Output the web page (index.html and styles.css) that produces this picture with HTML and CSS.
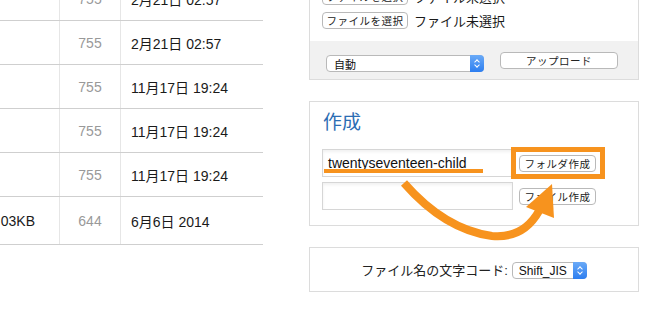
FILE: index.html
```html
<!DOCTYPE html>
<html lang="ja">
<head>
    <meta charset="UTF-8">
    <title>ファイルマネージャー</title>
    <link rel="stylesheet" href="styles.css">
</head>
<body>

<div class="page">
    <div class="file-list">
        <table class="files">
            <tr>
                <td class="size"></td>
                <td class="perm">755</td>
                <td class="date">2月21日 02:57</td>
            </tr>
            <tr>
                <td class="size"></td>
                <td class="perm">755</td>
                <td class="date">2月21日 02:57</td>
            </tr>
            <tr>
                <td class="size"></td>
                <td class="perm">755</td>
                <td class="date">11月17日 19:24</td>
            </tr>
            <tr>
                <td class="size"></td>
                <td class="perm">755</td>
                <td class="date">11月17日 19:24</td>
            </tr>
            <tr>
                <td class="size"></td>
                <td class="perm">755</td>
                <td class="date">11月17日 19:24</td>
            </tr>
            <tr class="last">
                <td class="size">1.03KB</td>
                <td class="perm">644</td>
                <td class="date">6月6日 2014</td>
            </tr>
        </table>
    </div>

    <div class="sidebar">
        <div class="box upload-box">
            <div class="upload-files">
                <div class="file-row">
                    <span class="btn file-btn">ファイルを選択</span>
                    <span class="file-name">ファイル未選択</span>
                </div>
                <div class="file-row">
                    <span class="btn file-btn">ファイルを選択</span>
                    <span class="file-name">ファイル未選択</span>
                </div>
            </div>
            <div class="upload-footer">
                <div class="select select-mode">
                    <span>自動</span>
                    <span class="stepper"></span>
                </div>
                <span class="btn upload-btn">アップロード</span>
            </div>
        </div>

        <div class="box create-box">
            <h2>作成</h2>
            <div class="create-row">
                <div class="text-input">twentyseventeen-child</div>
                <span class="btn create-btn">フォルダ作成</span>
            </div>
            <div class="create-row">
                <div class="text-input"></div>
                <span class="btn create-btn">ファイル作成</span>
            </div>

            <!-- 注釈 -->
            <div class="mark-underline"></div>
            <div class="mark-box"></div>
            <svg class="mark-arrow" width="200" height="80" viewBox="390 175 200 80">
                <path d="M404 184 C 425 208, 455 232, 492 237 C 515 239, 530 228, 539 212" fill="none" stroke="#f7931e" stroke-width="8"/>
                <polygon points="526,208 552,185 554,219" fill="#f7931e"/>
            </svg>
        </div>

        <div class="box charset-box">
            <span class="charset-label">ファイル名の文字コード:</span>
            <div class="select select-charset">
                <span>Shift_JIS</span>
                <span class="stepper"></span>
            </div>
        </div>
    </div>
</div>

</body>
</html>
```

FILE: styles.css
```css
body, html {
    margin: 0;
    padding: 0;
    background-color: #fff;
    font-family: "Liberation Sans", "Noto Sans CJK JP", sans-serif;
    color: #1a1a1a;
    overflow: hidden;
}

.page {
    display: flex;
    align-items: flex-start;
}

/* tabela de arquivos */
.file-list {
    width: 263px;
    flex-shrink: 0;
    overflow: hidden;
}

.files {
    border-collapse: collapse;
    table-layout: fixed;
    width: 283px;
    margin-left: -20px;
    margin-top: -23px;
    font-size: 14px;
}

.files td {
    height: 43px;
    padding: 0;
    border-bottom: 1px solid #cfcfcf;
    border-right: 1px solid #e6e6e6;
    white-space: nowrap;
}

.files tr.last td {
    height: 47px;
}

.files td.size {
    width: 55px;
    padding-right: 24px;
    text-align: right;
}

.files td.perm {
    width: 60px;
    text-align: center;
    color: #999;
}

.files td.date {
    padding-left: 10px;
    border-right: none;
}

/* coluna direita */
.sidebar {
    width: 330px;
    margin-left: 46px;
    flex-shrink: 0;
}

.box {
    border: 1px solid #dcdcdc;
    box-sizing: border-box;
    margin-bottom: 21px;
    position: relative;
}

.btn {
    display: inline-flex;
    align-items: center;
    justify-content: center;
    box-sizing: border-box;
    height: 17px;
    background-color: #fff;
    border: 1px solid #b9b9b9;
    border-radius: 4px;
    font-size: 10.5px;
    color: #222;
    letter-spacing: 0.5px;
}

.upload-box {
    margin-top: -25px;
}

.upload-files {
    padding: 12px 12px 12px;
    display: flex;
    flex-direction: column;
    gap: 7px;
}

.file-row {
    display: flex;
    align-items: center;
    height: 17px;
}

.file-btn {
    width: 86px;
}

.file-name {
    margin-left: 6px;
    font-size: 13px;
}

.upload-footer {
    background-color: #f1f1f1;
    height: 38px;
    box-sizing: border-box;
    padding: 11px 0 0 16px;
    display: flex;
    align-items: flex-start;
    gap: 16px;
}

.select {
    position: relative;
    display: flex;
    align-items: center;
    box-sizing: border-box;
    height: 17px;
    background-color: #fff;
    border: 1px solid #b9b9b9;
    border-radius: 4px;
    font-size: 11px;
    color: #111;
}

.select .stepper {
    position: absolute;
    right: -1px;
    top: -1px;
    bottom: -1px;
    width: 14px;
    border-radius: 0 4px 4px 0;
    background: linear-gradient(#6aaaf7, #2d7ef0);
}

.select .stepper::before, .select .stepper::after {
    content: "";
    position: absolute;
    left: 5px;
    width: 3px;
    height: 3px;
    border-left: 1px solid #fff;
    border-top: 1px solid #fff;
}

.select .stepper::before {
    top: 5px;
    transform: rotate(45deg);
}

.select .stepper::after {
    bottom: 5px;
    transform: rotate(-135deg);
}

.select-mode {
    width: 158px;
    margin-top: 3px;
    padding-left: 7px;
}

.upload-btn {
    width: 118px;
}

/* caixa de criação */
.create-box {
    padding: 10px 12px 15px;
}

.create-box h2 {
    margin: 0 0 15px 1px;
    font-size: 19px;
    line-height: 22px;
    font-weight: normal;
    color: #2c6db3;
}

.create-row {
    display: flex;
    align-items: center;
    gap: 6px;
}

.create-row + .create-row {
    margin-top: 5px;
}

.text-input {
    width: 191px;
    height: 28px;
    box-sizing: border-box;
    border: 1px solid #d6d6d6;
    box-shadow: inset 0 2px 3px rgba(0, 0, 0, 0.06);
    padding-left: 5px;
    font-size: 14px;
    line-height: 26px;
    color: #111;
}

.create-btn {
    width: 77px;
}

.mark-underline {
    position: absolute;
    left: 14px;
    top: 67px;
    width: 159px;
    height: 4px;
    background-color: #f7931e;
}

.mark-box {
    position: absolute;
    left: 201px;
    top: 45px;
    width: 94px;
    height: 32px;
    box-sizing: border-box;
    border: 5px solid #f7931e;
}

.mark-arrow {
    position: absolute;
    left: 80px;
    top: 72px;
    overflow: visible;
}

/* codificação */
.charset-box {
    height: 45px;
    display: flex;
    align-items: center;
    justify-content: center;
    gap: 4px;
}

.charset-label {
    font-size: 13px;
    color: #222;
}

.select-charset {
    width: 75px;
    padding-left: 6px;
    margin-top: 2px;
    font-size: 12px;
}
```
